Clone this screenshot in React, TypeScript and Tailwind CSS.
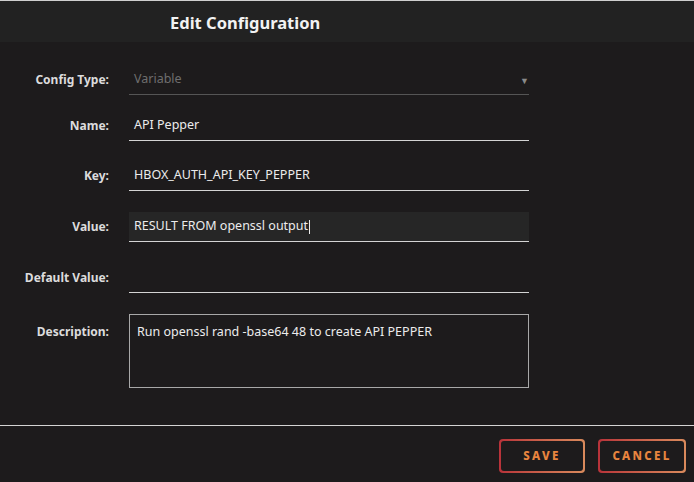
import React from 'react';

const font = { fontFamily: '"Noto Sans", "Open Sans", sans-serif' };

function Row({ label, children, className = '' }: { label: string; children: React.ReactNode; className?: string }) {
  return (
    <div className={`flex items-center ${className}`}>
      <label className="w-[109px] shrink-0 text-right text-[12px] font-bold text-[#dcdcdc]">{label}</label>
      <div className="ml-[20px] w-[400px]">{children}</div>
    </div>
  );
}

function OutlineButton({ label, width }: { label: string; width: string }) {
  return (
    <div className={`h-[34px] ${width} rounded-[4px] bg-gradient-to-r from-[#b8323a] to-[#d98a5c] p-[2px]`}>
      <button className="flex h-full w-full items-center justify-center rounded-[3px] bg-[#1d1b1c] text-[11.5px] font-extrabold tracking-[0.2em] text-[#e8853f]">
        {label}
      </button>
    </div>
  );
}

export default function App() {
  return (
    <div className="h-[482px] w-[694px] overflow-hidden bg-[#1d1b1c]" style={font}>
      {/* header */}
      <div className="h-[42px] border-t border-[#cfcfcf] bg-[#222222] pl-[170px] pt-[11px]">
        <h1 className="text-[16.5px] font-bold leading-[22px] text-[#f2f2f2]">Edit Configuration</h1>
      </div>

      <div className="pt-[23px]">
        <Row label="Config Type:">
          <div className="relative flex h-[30px] items-center border-b border-[#555555] px-[5px] text-[12.5px] text-[#6e6e6e]">
            Variable
            <span className="absolute right-[0px] top-[9px] text-[9px] text-[#8a8a8a]">▼</span>
          </div>
        </Row>

        <Row label="Name:" className="mt-[16px]">
          <div className="flex h-[30px] items-center border-b border-[#d4d4d4] px-[5px] text-[12.5px] text-[#ececec]">API Pepper</div>
        </Row>

        <Row label="Key:" className="mt-[20px]">
          <div className="flex h-[30px] items-center border-b border-[#d4d4d4] px-[5px] text-[12.5px] text-[#ececec]">HBOX_AUTH_API_KEY_PEPPER</div>
        </Row>

        <Row label="Value:" className="mt-[21px]">
          <div className="flex h-[30px] items-center border-b border-[#d4d4d4] bg-[#262626] px-[5px] text-[12.5px] text-[#ececec]">
            RESULT FROM openssl output
            <span className="ml-[1px] inline-block h-[14px] w-px bg-[#ececec]" />
          </div>
        </Row>

        <Row label="Default Value:" className="mt-[21px]">
          <div className="h-[30px] border-b border-[#d4d4d4]" />
        </Row>

        <div className="mt-[21px] flex">
          <label className="w-[109px] shrink-0 pt-[9px] text-right text-[12px] font-bold text-[#dcdcdc]">Description:</label>
          <div className="ml-[20px] h-[74px] w-[400px] border border-[#a8a8a8] px-[7px] pt-[8px] text-[12.5px] text-[#ececec]">
            Run openssl rand -base64 48 to create API PEPPER
          </div>
        </div>
      </div>

      {/* footer */}
      <div className="mt-[37px] border-t border-[#d4d4d4]">
        <div className="flex justify-end gap-[13px] pr-[8px] pt-[13px]">
          <OutlineButton label="SAVE" width="w-[86px]" />
          <OutlineButton label="CANCEL" width="w-[88px]" />
        </div>
      </div>
    </div>
  );
}
